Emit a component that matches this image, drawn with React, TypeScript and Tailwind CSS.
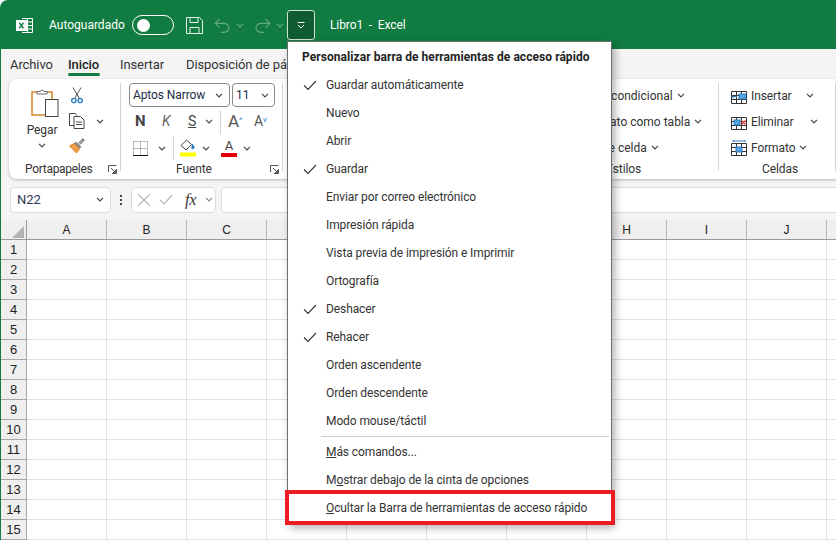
import { ReactNode } from 'react';

// D to G sit behind the open menu
const COLUMNS = ['A', 'B', 'C', '', '', '', '', 'H', 'I', 'J', ''];
const ROWS = [1, 2, 3, 4, 5, 6, 7, 8, 9, 10, 11, 12, 13, 14, 15];

const MENU_ITEMS = [
  { label: 'Guardar automáticamente', checked: true },
  { label: 'Nuevo' },
  { label: 'Abrir' },
  { label: 'Guardar', checked: true },
  { label: 'Enviar por correo electrónico' },
  { label: 'Impresión rápida' },
  { label: 'Vista previa de impresión e Imprimir' },
  { label: 'Ortografía' },
  { label: 'Deshacer', checked: true },
  { label: 'Rehacer', checked: true },
  { label: 'Orden ascendente' },
  { label: 'Orden descendente' },
  { label: 'Modo mouse/táctil' },
];

const Chevron = ({ className = 'text-[#444]' }: { className?: string }) => (
  <svg width="8" height="5" viewBox="0 0 8 5" fill="none" stroke="currentColor" strokeWidth="1.2" className={`shrink-0 ${className}`}>
    <path d="M1 .8 4 3.8 7 .8" />
  </svg>
);

const Launcher = () => (
  <svg width="9" height="9" viewBox="0 0 9 9" fill="none" stroke="#555" className="shrink-0">
    <path d="M.5 7V.5h8M8.500 4v4.500H4M3 3l4.500 4.500M7.500 5v2.500H5" />
  </svg>
);

const Separator = ({ className = '' }: { className?: string }) => <div className={`w-px bg-[#d4d4d4] ${className}`} />;

const ExcelLogo = () => (
  <svg width="18" height="17" viewBox="0 0 18 17" fill="none" stroke="#fff" strokeWidth="1">
    <path d="M6 1.500h10.500v14H6M6 5h10.500M6 8.500h10.500M6 12h10.500M11.500 1.500v14" />
    <rect x="0.500" y="3.500" width="10" height="10" fill="#fff" />
    <path d="M3.300 5.800 7.500 11.200M7.500 5.800 3.300 11.200" stroke="#107c41" strokeWidth="1.400" />
  </svg>
);

const SaveIcon = () => (
  <svg width="17" height="17" viewBox="0 0 17 17" fill="none" stroke="#e8f3ec" strokeWidth="1">
    <path d="M.500.500h13l3 3v13H.500zM4 .500v5h8v-5M4 16.500v-6h9v6" />
  </svg>
);

const UndoIcon = ({ flip }: { flip?: boolean }) => (
  <svg width="17" height="15" viewBox="0 0 17 15" fill="none" stroke="#63a884" strokeWidth="1.200" className={flip ? '-scale-x-100' : ''}>
    <path d="M5.500 1 1.200 5.300 5.500 9.600M1.500 5.300H10a5 4.500 0 0 1 0 9H7" />
  </svg>
);

const PasteIcon = () => (
  <svg width="28" height="30" viewBox="0 0 28 30" fill="none">
    <rect x="1" y="4" width="20" height="23" fill="#fff" stroke="#d9822b" strokeWidth="1.500" />
    <path d="M6 6V3.500h3.500a1.800 1.800 0 0 1 3.500 0H16V6z" fill="#fff" stroke="#666" />
    <rect x="14.500" y="11.500" width="12.500" height="17" fill="#fff" stroke="#444" />
  </svg>
);

const ScissorsIcon = () => (
  <svg width="12" height="17" viewBox="0 0 12 17" fill="none" stroke="#555">
    <path d="M2 .5 8 11M10 .5 4 11" />
    <circle cx="2.800" cy="13.500" r="2.200" stroke="#2a7ac0" strokeWidth="1.300" />
    <circle cx="9.200" cy="13.500" r="2.200" stroke="#2a7ac0" strokeWidth="1.300" />
  </svg>
);

const CopyIcon = () => (
  <svg width="16" height="16" viewBox="0 0 16 16" fill="none" stroke="#444">
    <path d="M5 12.500H.5V.5h6L8 2.500M5 3.500h6.500l3.500 3.500v8.500H5zM7 9h6M7 11.500h6" />
  </svg>
);

const BrushIcon = () => (
  <svg width="16" height="16" viewBox="0 0 16 16" fill="none">
    <path d="M9.500 5 14 .8l1.200 1.200L11 6.500" fill="#bbb" stroke="#555" />
    <path d="M7 3.500 12.500 9l-2 2L5 5.500z" fill="#888" />
    <path d="M5 5.500 10.500 11 7.500 15 .5 8z" fill="#ee9b4a" stroke="#d9822b" />
  </svg>
);

const BorderIcon = () => (
  <svg width="15" height="15" viewBox="0 0 15 15" fill="none" stroke="#777" strokeDasharray="1 1">
    <path d="M.5.500h14v14M.5.500v14M7.500.500v14M.5 7.500h14" />
    <path d="M0 14.500h15" stroke="#111" strokeDasharray="none" />
  </svg>
);

const FillIcon = () => (
  <svg width="16" height="18" viewBox="0 0 16 18" fill="none">
    <path d="M6.500 1 1 6.500 6 11l5.500-5.500z" fill="#fff" stroke="#444" />
    <path d="M12 5c1.500 1.500 2 2.500 2 3.500a1.200 1.200 0 0 1-2.500 0" fill="#2a7ac0" stroke="#2a7ac0" />
    <rect y="13.500" width="16" height="4" fill="#ffff00" />
  </svg>
);

const CellsIcon = ({ kind }: { kind: 'insert' | 'delete' | 'format' }) => (
  <svg width="16" height="16" viewBox="0 0 16 16" fill="none" stroke="#333">
    {kind === 'format' && <path d="M2 1h12M2 .0v2M14 .0v2" stroke="#2a7ac0" />}
    <path d="M.5 3.500h15v12H.5zM5.500 3.500v12M10.500 3.500v12M.5 7.500h15M.5 11.500h15" />
    {kind === 'insert' && <rect x="8" y="6" width="7" height="5" fill="#5aa5e0" stroke="#2a7ac0" />}
    {kind === 'insert' && <path d="M6 8.500H1M3 6.500l-2 2 2 2" stroke="#2a7ac0" />}
    {kind === 'delete' && <rect x="3" y="6" width="6" height="5" fill="#5aa5e0" stroke="#2a7ac0" />}
    {kind === 'delete' && <path d="M10.500 6.500l4 4M14.500 6.500l-4 4" stroke="#e8474c" strokeWidth="1.400" />}
    {kind === 'format' && <rect x="5" y="7" width="6" height="5" fill="#5aa5e0" stroke="#2a7ac0" />}
  </svg>
);

const CheckMark = () => (
  <svg width="14" height="11" viewBox="0 0 14 11" fill="none" stroke="#333" strokeWidth="1.100">
    <path d="M1 5.500 5 9.500 13 1" />
  </svg>
);

const TitleBar = () => (
  <div className="flex h-[49px] items-center bg-[#107c41] pt-[1px] text-[12px] text-white rounded-tl-[8px]">
    <div className="ml-[16px] w-[33px]"><ExcelLogo /></div>
    <span className="w-[83px] whitespace-nowrap tracking-normal">Autoguardado</span>
    <div className="flex h-[20px] w-[42px] items-center rounded-full border border-white pl-[4px]">
      <div className="h-[13px] w-[13px] rounded-full bg-white" />
    </div>
    <div className="ml-[12px] w-[20px]"><SaveIcon /></div>
    <div className="ml-[8px] flex w-[40px] items-center gap-[5px]">
      <UndoIcon />
      <Chevron className="text-[#63a884]" />
    </div>
    <div className="flex w-[33px] items-center gap-[5px]">
      <UndoIcon flip />
      <Chevron className="text-[#63a884]" />
    </div>
    <div className="flex h-[30px] w-[28px] items-center justify-center rounded-[3px] border border-[#cfe3d7] bg-[#0e5c30]">
      <svg width="10" height="7" viewBox="0 0 10 7" fill="none" stroke="#fff">
        <path d="M1.500.5h7M2 3l3 3 3-3" />
      </svg>
    </div>
    <span className="ml-[15px]">Libro1&nbsp; -&nbsp; Excel</span>
  </div>
);

const Tabs = () => (
  <div className="flex h-[30px] items-start pl-[9px] pt-[6px] text-[13px] text-[#333]">
    <span className="w-[58px]">Archivo</span>
    <div className="relative w-[52px] font-medium">
      <span className="text-[#222]">Inicio</span>
      <div className="absolute left-0 top-[18px] h-[2.500px] w-[32px] rounded-full bg-[#107c41]" />
    </div>
    <span className="w-[66px]">Insertar</span>
    <span className="whitespace-nowrap">Disposición de página</span>
  </div>
);

const GroupLabel = ({ children, className = '' }: { children: ReactNode; className?: string }) => (
  <div className={`flex h-[16px] shrink-0 items-center text-[12px] leading-[16px] text-[#333] ${className}`}>{children}</div>
);

const ClipboardGroup = () => (
  <div className="flex w-[111px] shrink-0 flex-col">
    <div className="flex h-[78px] shrink-0 pl-[20px] pt-[4px]">
      <div className="flex w-[26px] flex-col items-center pt-[1px] text-[12px] text-[#333]">
        <div className="ml-[5px]"><PasteIcon /></div>
        <span className="mt-[4px] leading-[16px]">Pegar</span>
        <div className="mt-[5px]"><Chevron /></div>
      </div>
      <div className="ml-[14px] flex flex-col gap-[9px]">
        <div className="flex h-[17px] w-[16px] justify-center"><ScissorsIcon /></div>
        <div className="flex items-center gap-[11px]"><CopyIcon /><Chevron /></div>
        <BrushIcon />
      </div>
    </div>
    <GroupLabel className="pl-[16px] pr-[3px]">
      <span className="tracking-[-0.3px]">Portapapeles</span>
      <div className="ml-auto"><Launcher /></div>
    </GroupLabel>
  </div>
);

const FontGroup = () => (
  <div className="flex w-[161px] shrink-0 flex-col pl-[8px]">
    <div className="flex h-[24px] shrink-0 gap-[2px] text-[12px]">
      <div className="flex w-[101px] items-center justify-between rounded-[4px] border border-[#8a8a8a] pl-[3px] pr-[6px] text-[#222c44]">
        <span>Aptos Narrow</span>
        <Chevron />
      </div>
      <div className="flex w-[43px] items-center justify-between rounded-[4px] border border-[#8a8a8a] pl-[3px] pr-[5px] text-[#222c44]">
        <span>11</span>
        <Chevron />
      </div>
    </div>
    <div className="flex h-[29px] shrink-0 items-center pl-[6px] text-[#444]">
      <span className="w-[27px] text-[15px] font-bold">N</span>
      <span className="w-[26px] text-[14px] italic text-[#666]">K</span>
      <span className="w-[17px] text-[14px] underline">S</span>
      <Chevron />
      <Separator className="ml-[7px] h-[24px]" />
      <span className="ml-[7px] w-[26px] text-[17px] text-[#555]">A<sup className="text-[8px] text-[#2a7ac0]">^</sup></span>
      <span className="w-[20px] text-[14px] text-[#555]">A<sup className="text-[8px] text-[#2a7ac0]">v</sup></span>
    </div>
    <div className="flex h-[24px] shrink-0 items-center pl-[4px]">
      <BorderIcon />
      <div className="ml-[10px]"><Chevron /></div>
      <Separator className="ml-[7px] h-[24px]" />
      <div className="ml-[6px]"><FillIcon /></div>
      <div className="ml-[6px]"><Chevron /></div>
      <div className="ml-[11px] flex w-[16px] flex-col items-center text-[13px] leading-[14px] text-[#444]">
        <span>A</span>
        <div className="h-[4px] w-[16px] bg-[#e60000]" />
      </div>
      <div className="ml-[6px]"><Chevron /></div>
    </div>
    <GroupLabel className="mt-[1px] pr-[3px]">
      <span className="ml-[47px]">Fuente</span>
      <div className="ml-auto"><Launcher /></div>
    </GroupLabel>
  </div>
);

const StylesGroup = () => (
  <div className="flex w-[435px] shrink-0 flex-col pl-[280px] text-[12px] text-[#333]">
    <div className="flex h-[78px] shrink-0 flex-col gap-[9px] pt-[4px] whitespace-nowrap tracking-normal">
      <div className="flex h-[17px] items-center gap-[4px]">Formato condicional <Chevron /></div>
      <div className="flex h-[17px] items-center gap-[4px]">Dar formato como tabla <Chevron /></div>
      <div className="flex h-[17px] items-center gap-[4px]">Estilos de celda <Chevron /></div>
    </div>
    <GroupLabel className="pl-[43px]">Estilos</GroupLabel>
  </div>
);

const CellsGroup = () => (
  <div className="flex w-[116px] shrink-0 flex-col pl-[12px] text-[12px] text-[#333]">
    <div className="flex h-[78px] shrink-0 flex-col gap-[9px] pt-[4px]">
      <div className="flex h-[17px] items-center"><CellsIcon kind="insert" /><span className="ml-[4px] w-[55px]">Insertar</span><Chevron /></div>
      <div className="flex h-[17px] items-center"><CellsIcon kind="delete" /><span className="ml-[4px] w-[59px]">Eliminar</span><Chevron /></div>
      <div className="flex h-[17px] items-center"><CellsIcon kind="format" /><span className="ml-[4px] w-[48px]">Formato</span><Chevron /></div>
    </div>
    <GroupLabel className="pl-[31px]">Celdas</GroupLabel>
  </div>
);

const Ribbon = () => (
  <div className="ml-[8px] flex h-[100px] items-stretch overflow-hidden rounded-l-[8px] bg-white py-[4px] shadow-[0_1px_3px_rgba(0,0,0,0.25)]">
    <ClipboardGroup />
    <Separator className="h-[88px]" />
    <FontGroup />
    <Separator className="h-[88px]" />
    <StylesGroup />
    <Separator className="h-[88px]" />
    <CellsGroup />
    <Separator className="h-[88px]" />
  </div>
);

const FormulaBar = () => (
  <div className="flex h-[41px] items-center pl-[9px] text-[#444]">
    <div className="flex h-[26px] w-[101px] items-center justify-between rounded-[5px] border border-[#dcdcdc] bg-white pl-[6px] pr-[6px] text-[13px] text-[#2b3a55]">
      <span>N22</span>
      <Chevron />
    </div>
    <div className="ml-[9px] flex w-[3px] flex-col gap-[2px]">
      <div className="h-[2px] w-[2px] bg-[#444]" />
      <div className="h-[2px] w-[2px] bg-[#444]" />
      <div className="h-[2px] w-[2px] bg-[#444]" />
    </div>
    <div className="ml-[8px] flex h-[26px] w-[85px] items-center rounded-[5px] border border-[#dcdcdc] bg-white pl-[6px]">
      <svg width="12" height="12" viewBox="0 0 12 12" fill="none" stroke="#b8b8b8" strokeWidth="1.200"><path d="M.5.500l11 11M11.500.500l-11 11" /></svg>
      <svg width="14" height="11" viewBox="0 0 14 11" fill="none" stroke="#b8b8b8" strokeWidth="1.200" className="ml-[9px]"><path d="M1 6l4 4 8-9" /></svg>
      <span className="ml-[12px] w-[19px] font-['Liberation_Serif',serif] text-[16px] italic text-[#333]">fx</span>
      <div className="ml-[1px]"><Chevron className="text-[#888]" /></div>
    </div>
    <div className="ml-[5px] h-[26px] flex-1 rounded-l-[5px] border border-r-0 border-[#dcdcdc] bg-white" />
  </div>
);

const Sheet = () => (
  <div className="font-['Liberation_Sans',sans-serif] text-[12px] tracking-normal text-[#222]">
    <div className="flex h-[20px] border-b border-[#9a9a9a] bg-[#efefef]">
      <div className="flex h-full w-[26px] shrink-0 items-end justify-end border-r border-[#9a9a9a] pb-[1px] pr-[2px]">
        <div className="h-[12px] w-[12px] bg-[#b4b4b4] [clip-path:polygon(100%_0,100%_100%,0_100%)]" />
      </div>
      {COLUMNS.map((column, i) => (
        <div key={i} className="flex w-[80px] shrink-0 items-center justify-center border-r border-[#b8b8b8]">
          {column}
        </div>
      ))}
    </div>
    {ROWS.map((row) => (
      <div key={row} className="flex h-[20px]">
        <div className="flex w-[26px] shrink-0 items-center justify-center border-r border-b border-[#a8a8a8] bg-[#efefef] text-[13px]">
          {row}
        </div>
        {COLUMNS.map((_, i) => (
          <div key={i} className="w-[80px] shrink-0 border-r border-b border-[#e1e1e1] bg-white" />
        ))}
      </div>
    ))}
  </div>
);

const MenuRow = ({ children, checked }: { children: ReactNode; checked?: boolean }) => (
  <div className="flex h-[28px] items-center whitespace-nowrap">
    <div className="flex w-[38px] justify-end pr-[9px]">{checked && <CheckMark />}</div>
    <span>{children}</span>
  </div>
);

const QuickAccessMenu = () => (
  <div className="absolute left-[287px] top-[41px] w-[325px] border border-[#6e6e6e] bg-white pb-[1px] text-[12px] text-[#333] shadow-[3px_4px_8px_rgba(0,0,0,0.3)]">
    <div className="flex h-[29px] items-center whitespace-nowrap pl-[14px] pt-[1px] font-bold tracking-[0.06px] text-[#222]">
      Personalizar barra de herramientas de acceso rápido
    </div>
    {MENU_ITEMS.map((item) => (
      <MenuRow key={item.label} checked={item.checked}>{item.label}</MenuRow>
    ))}
    <div className="my-[1px] ml-[33px] h-px w-[288px] bg-[#cfcfcf]" />
    <MenuRow><span className="underline">M</span>ás comandos...</MenuRow>
    <MenuRow>M<span className="underline">o</span>strar debajo de la cinta de opciones</MenuRow>
    <MenuRow><span className="underline">O</span>cultar la Barra de herramientas de acceso rápido</MenuRow>
    <div className="absolute left-[-3px] top-[448px] h-[35px] w-[330px] border-[4.500px] border-[#ed1c24]" />
  </div>
);

export default function App() {
  return (
    <div className="relative h-[541px] w-[836px] overflow-hidden bg-white font-['Roboto',sans-serif] tracking-[-0.1px]">
      <TitleBar />
      <div className="border-l border-[#107c41] bg-[#f4f4f4]">
        <Tabs />
        <Ribbon />
        <FormulaBar />
        <Sheet />
      </div>
      <QuickAccessMenu />
    </div>
  );
}
